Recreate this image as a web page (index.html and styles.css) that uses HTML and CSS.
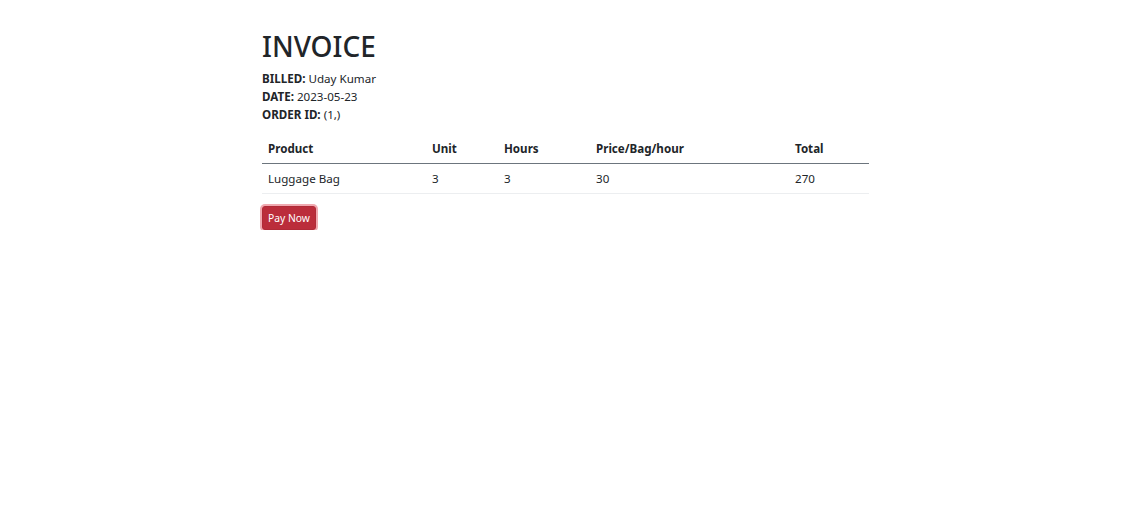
FILE: index.html
```html
<!DOCTYPE html>
<html>
<head>
<meta charset="utf-8">
<link rel="stylesheet" href="styles.css">
</head>
<body>
<div class="invoice">
  <h1 class="title">INVOICE</h1>
  <p class="meta"><b>BILLED:</b> Uday Kumar</p>
  <p class="meta"><b>DATE:</b> 2023-05-23</p>
  <p class="meta"><b>ORDER ID:</b> (1,)</p>
  <table class="items">
    <thead>
      <tr>
        <th class="c-product">Product</th>
        <th class="c-unit">Unit</th>
        <th class="c-hours">Hours</th>
        <th class="c-price">Price/Bag/hour</th>
        <th class="c-total">Total</th>
      </tr>
    </thead>
    <tbody>
      <tr>
        <td>Luggage Bag</td>
        <td>3</td>
        <td>3</td>
        <td>30</td>
        <td>270</td>
      </tr>
    </tbody>
  </table>
  <button class="pay">Pay Now</button>
</div>
</body>
</html>
```
FILE: styles.css
```css
html, body {
  margin: 0;
  padding: 0;
  background: #fff;
}
body {
  font-family: "Noto Sans", "Open Sans", sans-serif;
  font-size: 11.6px;
  color: #212529;
}
.invoice {
  width: 607px;
  margin: 0 auto;
  padding-top: 28px;
}
.title {
  margin: 0 0 6px;
  font-size: 28px;
  font-weight: 500;
  line-height: 36px;
  letter-spacing: 0;
}
.meta {
  margin: 0;
  line-height: 18px;
}
.meta b {
  font-weight: 700;
}
.items {
  width: 100%;
  border-collapse: collapse;
  margin-top: 10px;
}
.items th,
.items td {
  text-align: left;
  padding: 0 6px;
  height: 29px;
}
.items th {
  font-weight: 700;
  border-bottom: 1px solid #6c757d;
  vertical-align: middle;
}
.items td {
  border-bottom: 1px solid #eceef0;
}
.c-product { width: 152px; }
.c-unit { width: 60px; }
.c-hours { width: 80px; }
.c-price { width: 187px; }
.pay {
  margin-top: 12px;
  font-family: inherit;
  font-size: 10.3px;
  color: #fff;
  background: #bb2d3b;
  border: 1px solid #b02a37;
  border-radius: 3px;
  padding: 0 5px;
  height: 24px;
  line-height: 22px;
  box-shadow: 0 0 0 2px rgba(225, 83, 97, 0.5);
}
```
